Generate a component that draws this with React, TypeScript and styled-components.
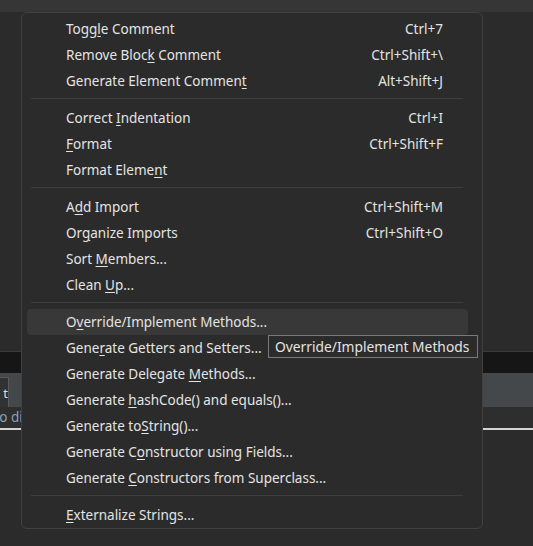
import React from "react";
import styled, { createGlobalStyle } from "styled-components";

const Global = createGlobalStyle`
  html, body { margin: 0; padding: 0; background: #2b2b2b; }
  body { font-family: "Noto Sans", "Open Sans", sans-serif; }
  #root { width: 533px; height: 546px; overflow: hidden; }
`;

const Page = styled.div`
  position: relative;
  width: 533px;
  height: 546px;
  display: flex;
  flex-direction: column;
  background: #2b2b2b;
  overflow: hidden;
`;

const TopBar = styled.div`
  height: 12px;
  background: #363636;
`;

const Editor = styled.div`
  height: 339px;
  background: #2b2b2b;
  border-bottom: 1px solid #3a3a3a;
`;

const DarkStrip = styled.div`
  height: 21px;
  background: #161616;
`;

const TabBar = styled.div`
  height: 34px;
  background: #45484a;
  display: flex;
  align-items: flex-end;
`;

const Tab = styled.div`
  width: 8px;
  height: 29px;
  background: #323232;
  border: 1px solid #5a5a5a;
  border-left: none;
  border-bottom: none;
  color: #ddd;
  font-size: 13px;
  display: flex;
  align-items: center;
  justify-content: flex-end;
  overflow: hidden;
`;

const Console = styled.div`
  height: 21px;
  background: #2e2e2e;
  color: #8d9fb4;
  font-size: 13.5px;
  line-height: 21px;
  white-space: nowrap;
  overflow: hidden;
`;

const ConsoleText = styled.span`
  display: inline-block;
  margin-left: -11px;
`;

const Rule = styled.div`
  height: 2px;
  background: #d4d4d4;
`;

const Rest = styled.div`
  flex: 1;
  background: #2b2b2b;
`;

const Menu = styled.div`
  position: absolute;
  left: 21px;
  top: 12px;
  width: 462px;
  box-sizing: border-box;
  background: #2b2b2b;
  border: 1px solid #404040;
  border-radius: 6px;
  padding: 3px 14px 0 5px;
  display: flex;
  flex-direction: column;
  font-size: 13.5px;
  color: #e4e4e4;
`;

const Row = styled.div<{ $active?: boolean }>`
  height: 26px;
  box-sizing: border-box;
  display: flex;
  align-items: center;
  justify-content: space-between;
  padding: 2px 25px 0 39px;
  border-radius: 4px;
  background: ${(p) => (p.$active ? "#383838" : "transparent")};
  white-space: nowrap;
  line-height: 1;
`;

const Label = styled.span``;

const Shortcut = styled.span``;

const U = styled.span`
  text-decoration: underline;
  text-underline-offset: 2px;
`;

const Sep = styled.div`
  height: 1px;
  background: #3e3e3e;
  margin: 4px 5px 6px 4px;
`;

const Tooltip = styled.div`
  position: absolute;
  left: 268px;
  top: 335px;
  width: 210px;
  height: 23px;
  box-sizing: border-box;
  padding: 1px 6px 0;
  display: flex;
  align-items: center;
  background: #2b2b2b;
  border: 1px solid #7a7a7a;
  color: #e4e4e4;
  font-size: 13.8px;
  line-height: 1;
  white-space: nowrap;
`;

type Item = { pre: string; u: string; post: string; sc?: string; active?: boolean };
type Group = Item[];

const groups: Group[] = [
  [
    { pre: "Togg", u: "l", post: "e Comment", sc: "Ctrl+7" },
    { pre: "Remove Bloc", u: "k", post: " Comment", sc: "Ctrl+Shift+\\" },
    { pre: "Generate Element Commen", u: "t", post: "", sc: "Alt+Shift+J" },
  ],
  [
    { pre: "Correct ", u: "I", post: "ndentation", sc: "Ctrl+I" },
    { pre: "", u: "F", post: "ormat", sc: "Ctrl+Shift+F" },
    { pre: "Format Eleme", u: "n", post: "t" },
  ],
  [
    { pre: "A", u: "d", post: "d Import", sc: "Ctrl+Shift+M" },
    { pre: "Or", u: "g", post: "anize Imports", sc: "Ctrl+Shift+O" },
    { pre: "Sort ", u: "M", post: "embers..." },
    { pre: "Clean ", u: "U", post: "p..." },
  ],
  [
    { pre: "O", u: "v", post: "erride/Implement Methods...", active: true },
    { pre: "Gene", u: "r", post: "ate Getters and Setters..." },
    { pre: "Generate Delegate ", u: "M", post: "ethods..." },
    { pre: "Generate ", u: "h", post: "ashCode() and equals()..." },
    { pre: "Generate to", u: "S", post: "tring()..." },
    { pre: "Generate C", u: "o", post: "nstructor using Fields..." },
    { pre: "Generate ", u: "C", post: "onstructors from Superclass..." },
  ],
  [{ pre: "", u: "E", post: "xternalize Strings..." }],
];

export default function App() {
  return (
    <>
      <Global />
      <Page>
        <TopBar />
        <Editor />
        <DarkStrip />
        <TabBar>
          <Tab>t</Tab>
        </TabBar>
        <Console>
          <ConsoleText>No diagnostics</ConsoleText>
        </Console>
        <Rule />
        <Rest />
        <Menu>
          {groups.map((g, gi) => (
            <React.Fragment key={gi}>
              {gi > 0 && <Sep />}
              {g.map((it, i) => (
                <Row key={i} $active={it.active}>
                  <Label>
                    {it.pre}
                    <U>{it.u}</U>
                    {it.post}
                  </Label>
                  {it.sc && <Shortcut>{it.sc}</Shortcut>}
                </Row>
              ))}
            </React.Fragment>
          ))}
        </Menu>
        <Tooltip>Override/Implement Methods</Tooltip>
      </Page>
    </>
  );
}
